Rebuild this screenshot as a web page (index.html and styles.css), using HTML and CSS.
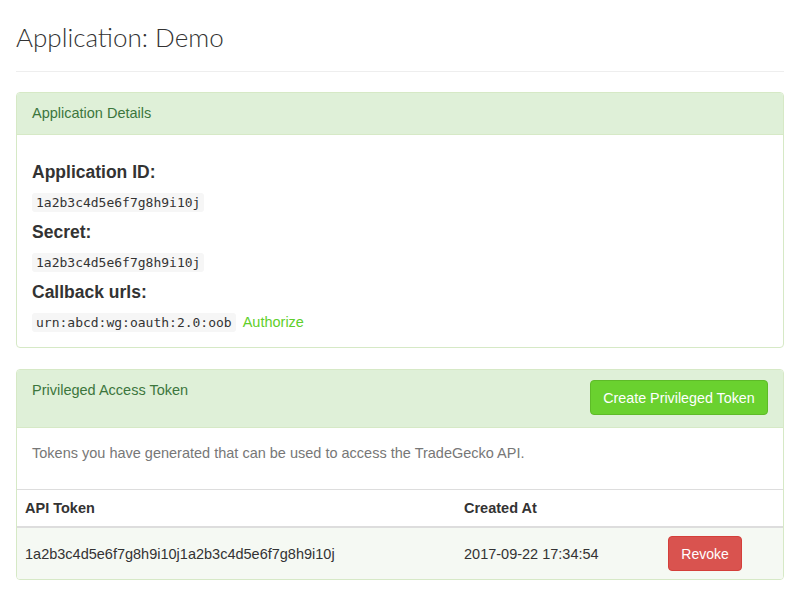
FILE: index.html
```html
<!DOCTYPE html>
<html>
<head>
<meta charset="utf-8">
<link rel="stylesheet" href="styles.css">
</head>
<body>
<div class="page">
  <h1 class="title">Application: Demo</h1>
  <hr class="rule">

  <div class="panel">
    <div class="panel-heading">Application Details</div>
    <div class="panel-body details">
      <h4 class="label">Application ID:</h4>
      <div class="value"><code>1a2b3c4d5e6f7g8h9i10j</code></div>
      <h4 class="label">Secret:</h4>
      <div class="value"><code>1a2b3c4d5e6f7g8h9i10j</code></div>
      <h4 class="label">Callback urls:</h4>
      <div class="value"><code>urn:abcd:wg:oauth:2.0:oob</code><a class="link" href="#">Authorize</a></div>
    </div>
  </div>

  <div class="panel">
    <div class="panel-heading heading-split">
      <span>Privileged Access Token</span>
      <button class="btn btn-green">Create Privileged Token</button>
    </div>
    <div class="panel-body">
      <p class="muted">Tokens you have generated that can be used to access the TradeGecko API.</p>
    </div>
    <table class="table">
      <thead>
        <tr><th class="c1">API Token</th><th class="c2">Created At</th><th class="c3"></th></tr>
      </thead>
      <tbody>
        <tr><td>1a2b3c4d5e6f7g8h9i10j1a2b3c4d5e6f7g8h9i10j</td><td>2017-09-22 17:34:54</td><td><button class="btn btn-red">Revoke</button></td></tr>
      </tbody>
    </table>
  </div>
</div>
</body>
</html>
```
FILE: styles.css
```css
* { box-sizing: border-box; }
html, body { margin: 0; padding: 0; background: #fff; }
body {
  font-family: "Liberation Sans", Arial, sans-serif;
  font-size: 14.5px;
  color: #333;
}
.page { padding: 0 16px; }
.title {
  font-family: Lato, "Liberation Sans", sans-serif;
  font-weight: 300;
  font-size: 26px;
  line-height: 36px;
  margin: 19px 0 0;
  color: #333;
}
.rule {
  border: 0;
  border-top: 1px solid #eee;
  margin: 16px 0 20px;
}
.panel {
  border: 1px solid #d6e9c6;
  border-radius: 4px;
  margin-bottom: 21px;
  background: #fff;
  overflow: hidden;
}
.panel-heading {
  background: #dff0d8;
  color: #3c763d;
  border-bottom: 1px solid #d6e9c6;
  padding: 10px 15px;
  font-size: 14.5px;
  line-height: 21px;
}
.heading-split {
  display: flex;
  justify-content: space-between;
  align-items: flex-start;
  padding: 10px 15px 12px;
}
.panel-body { padding: 15px 15px 26px; }
.details { padding: 22px 15px 10px; }
.label {
  margin: 0;
  font-size: 17.5px;
  font-weight: bold;
  line-height: 30px;
  height: 30px;
  color: #333;
}
.value {
  display: flex;
  align-items: center;
  height: 30px;
}
code {
  font-family: "DejaVu Sans Mono", "Liberation Mono", monospace;
  font-size: 13px;
  line-height: 15px;
  background: #f6f6f6;
  color: #333;
  padding: 2px 4px;
  border-radius: 3px;
}
.link {
  color: #5fcf2b;
  text-decoration: none;
  margin-left: 7px;
}
.muted { margin: 0; color: #777; line-height: 20px; }
.btn {
  font-family: "Liberation Sans", Arial, sans-serif;
  font-size: 14px;
  line-height: 20px;
  color: #fff;
  border-radius: 4px;
  padding: 0;
  white-space: nowrap;
  cursor: pointer;
}
.btn-green {
  background: #6ad12f;
  border: 1px solid #5ebb28;
  width: 178px;
  height: 35px;
  font-size: 14.3px;
}
.btn-red {
  background: #d9534f;
  border: 1px solid #d43f3a;
  width: 74px;
  height: 35px;
}
.table {
  width: 100%;
  border-collapse: collapse;
  border-top: 1px solid #ddd;
}
.table th {
  text-align: left;
  font-weight: bold;
  padding: 8px;
  line-height: 20px;
  border-bottom: 2px solid #ddd;
}
.table td {
  padding: 8px;
  line-height: 20px;
  vertical-align: middle;
  background: #f5f9f3;
}
.c1 { width: 439px; }
.c2 { width: 204px; }
```
